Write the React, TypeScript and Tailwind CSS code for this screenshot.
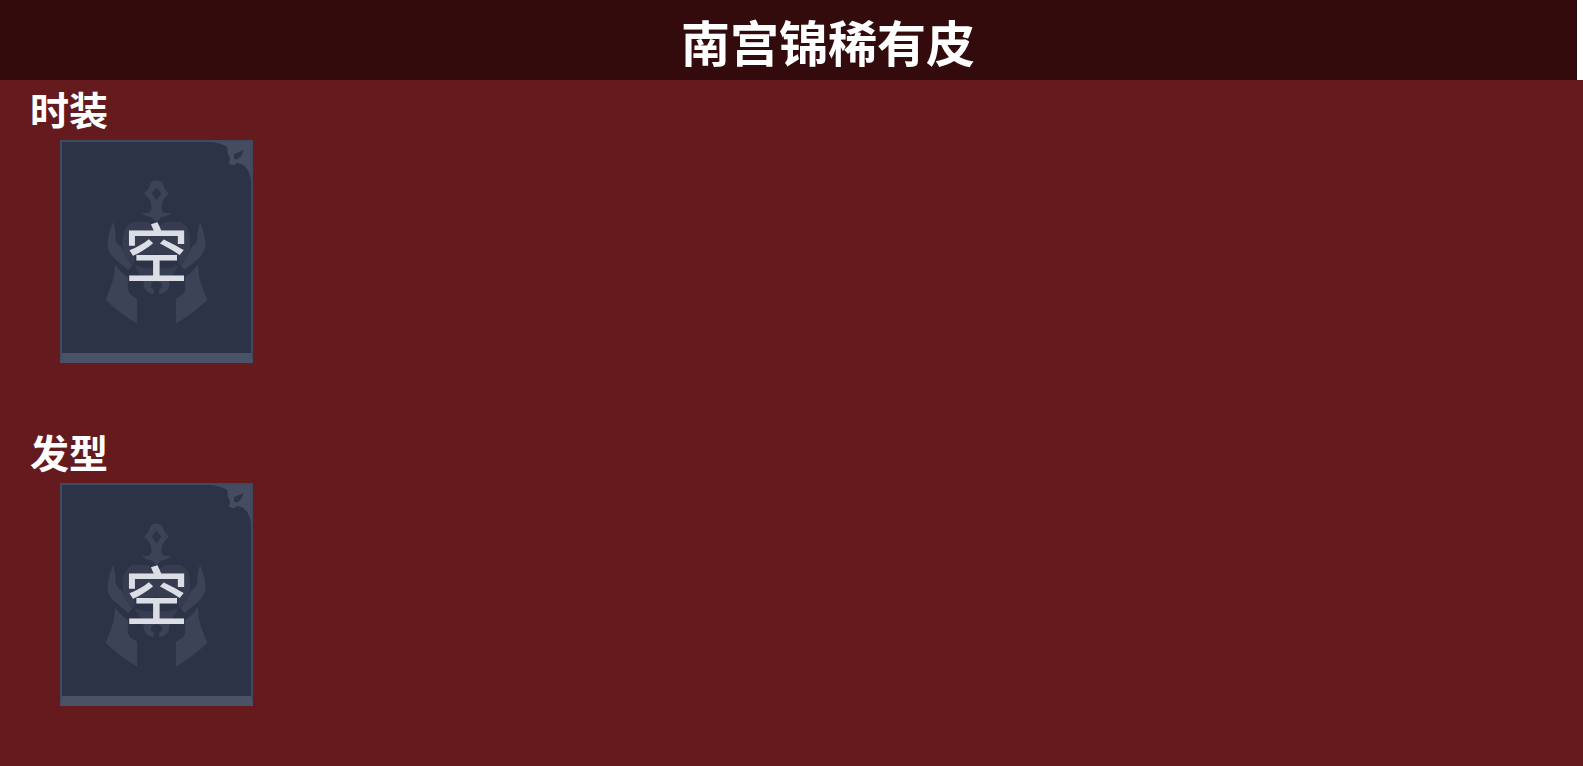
import React from "react";

const sections = ["时装", "发型"];

const HalfHelmet = () => (
  <>
    <path d="M158 245 C150 265 144 287 141 310 C142 332 154 348 172 362 L204 388 L216 374 C202 358 190 338 182 318 C170 312 165 304 166 292 C166 276 163 260 158 245 Z" />
    <path d="M166 372 C160 384 164 398 160 410 C154 436 144 458 136 477 C166 506 198 530 230 548 L230 474 L208 460 L202 446 L203 410 C188 400 174 388 166 372 Z" />
    <path d="M248 405 L249 424 C250 442 257 454 270 458 L280 460 L280 446 L270 440 L274 426 L288 422 L288 405 Z" />
    <path
      d="M288 262 L262 245 L216 245 C192 256 184 284 187 318 C190 342 204 362 222 374 L222 346 L288 340 Z"
      opacity="0.6"
    />
    <path d="M222 374 L256 384 L288 380 L288 406 L240 406 Z" opacity="0.6" />
  </>
);

const CardArt = () => (
  <svg
    viewBox="0 0 576 666"
    aria-hidden="true"
    className="absolute inset-0 h-full w-full"
  >
    <g fill="#3d4356">
      <path
        fillRule="evenodd"
        d="M288 121 C300 121 306 126 308 136 C311 146 316 152 325 160 C316 170 307 178 304 188 L303 206 C305 214 310 217 317 218 L332 218 C323 226 314 229 303 231 L288 246 L273 231 C262 229 253 226 244 218 L259 218 C266 217 271 214 273 206 L272 188 C269 178 260 170 251 160 C260 152 265 146 268 136 C270 126 276 121 288 121 Z M288 142 C283 148 278 154 274 160 C278 167 283 174 288 180 C293 174 298 167 302 160 C298 154 293 148 288 142 Z"
      />
      <HalfHelmet />
      <g transform="matrix(-1 0 0 1 576 0)">
        <HalfHelmet />
      </g>
    </g>
    <path
      fill="#454b60"
      d="M450 6 L570 6 L570 120 C567 98 560 84 546 74 L530 68 L518 76 L504 70 L508 56 L500 38 L500 22 C488 12 470 8 450 6 Z"
    />
    <path fill="#2e3347" d="M519 56 L520 42 L530 38 L548 30 L542 46 L530 58 Z" />
  </svg>
);

const EmptyCard = () => (
  <div className="relative flex h-[223px] w-[193px] items-center justify-center border-2 border-b-[10px] border-[#404a5e] border-b-[#4a5267] bg-[#2d3347] pt-0.5">
    <div className="absolute -inset-x-0.5 -top-0.5 -bottom-2.5">
      <CardArt />
    </div>
    <span className="relative text-[64px] leading-none font-medium text-[#dcdee5]">
      空
    </span>
  </div>
);

const App = () => {
  return (
    <div className="min-h-screen bg-[#651b1e] font-['Noto_Sans_CJK_SC',sans-serif] text-white">
      <header className="flex h-20 border-r-6 border-white bg-[#330b0c]">
        <h1 className="flex flex-1 items-center justify-center border-r border-[#1d1113] pt-0.5 pl-20 text-[49px] font-bold">
          南宫锦稀有皮
        </h1>
      </header>
      <main>
        {sections.map((title) => (
          <section key={title} className="px-[30px] pb-[60px]">
            <h2 className="flex h-[60px] items-center pb-1 text-[39px] font-bold">
              {title}
            </h2>
            <div className="px-[30px]">
              <EmptyCard />
            </div>
          </section>
        ))}
      </main>
    </div>
  );
};

export default App;
